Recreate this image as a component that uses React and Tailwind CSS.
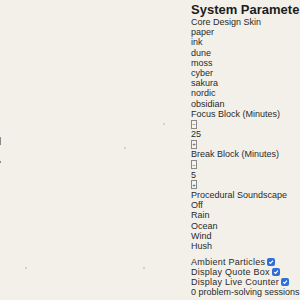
const skins = ['paper', 'ink', 'dune', 'moss', 'cyber', 'sakura', 'nordic', 'obsidian']
const sounds = ['Off', 'Rain', 'Ocean', 'Wind', 'Hush']

// faint floating particles over the canvas
const particles = [
  { x: 163, y: 123, s: 2 },
  { x: 124, y: 147, s: 2 },
  { x: 25, y: 267, s: 2 },
  { x: 143, y: 267, s: 2 },
]

function Stepper({ value }) {
  return (
    <div className="flex flex-col items-start">
      <div className="h-[10px] flex items-center">
        <button className="w-[6px] h-[9px] border border-[#8a8a8a] bg-[#f6f4ef] text-[6px] leading-none text-[#444] flex items-center justify-center">−</button>
      </div>
      <span className="leading-[10.35px]">{value}</span>
      <div className="h-[10px] flex items-center">
        <button className="w-[6px] h-[9px] border border-[#8a8a8a] bg-[#f6f4ef] text-[6px] leading-none text-[#444] flex items-center justify-center">+</button>
      </div>
    </div>
  )
}

function Toggle({ label }) {
  return (
    <label className="flex items-center gap-[2px] h-[10px] tracking-[0.25px]">
      {label}
      <span className="w-[8px] h-[8px] rounded-[2px] bg-[#2f6fd8] flex items-center justify-center">
        <svg width="6" height="6" viewBox="0 0 10 10">
          <path d="M2 5.2 L4.2 7.4 L8.2 2.6" stroke="white" strokeWidth="2" fill="none" />
        </svg>
      </span>
    </label>
  )
}

export default function App() {
  return (
    <div className="relative w-[300px] h-[300px] overflow-hidden bg-[#f3f0e9] font-['Liberation_Sans',Arial,sans-serif] text-[#2a2a2a]">
      {particles.map((p, i) => (
        <span
          key={i}
          className="absolute rounded-full bg-[#c9c6bf] blur-[0.5px]"
          style={{ left: p.x, top: p.y, width: p.s, height: p.s }}
        />
      ))}
      {/* edge of the off-screen timer */}
      <span className="absolute left-0 top-[137px] w-[1px] h-[8px] bg-[#8c8a86]" />
      <span className="absolute left-0 top-[161px] w-[1px] h-[2px] bg-[#8c8a86]" />

      <div className="absolute left-[191px] top-0 w-[200px] whitespace-nowrap text-[9px] leading-[10.2px]">
        <h2 className="text-[13px] font-bold leading-[15px] mt-[2px] text-[#1c1c1c]">System Parameters</h2>
        <div>Core Design Skin</div>
        {skins.map((s) => (
          <div key={s}>{s}</div>
        ))}
        <div>Focus Block (Minutes)</div>
        <Stepper value="25" />
        <div>Break Block (Minutes)</div>
        <Stepper value="5" />
        <div>Procedural Soundscape</div>
        {sounds.map((s) => (
          <div key={s}>{s}</div>
        ))}
        <div className="mt-[6px]">
          <Toggle label="Ambient Particles" />
          <Toggle label="Display Quote Box" />
          <Toggle label="Display Live Counter" />
          <div>0 problem-solving sessions completed</div>
        </div>
      </div>
    </div>
  )
}
